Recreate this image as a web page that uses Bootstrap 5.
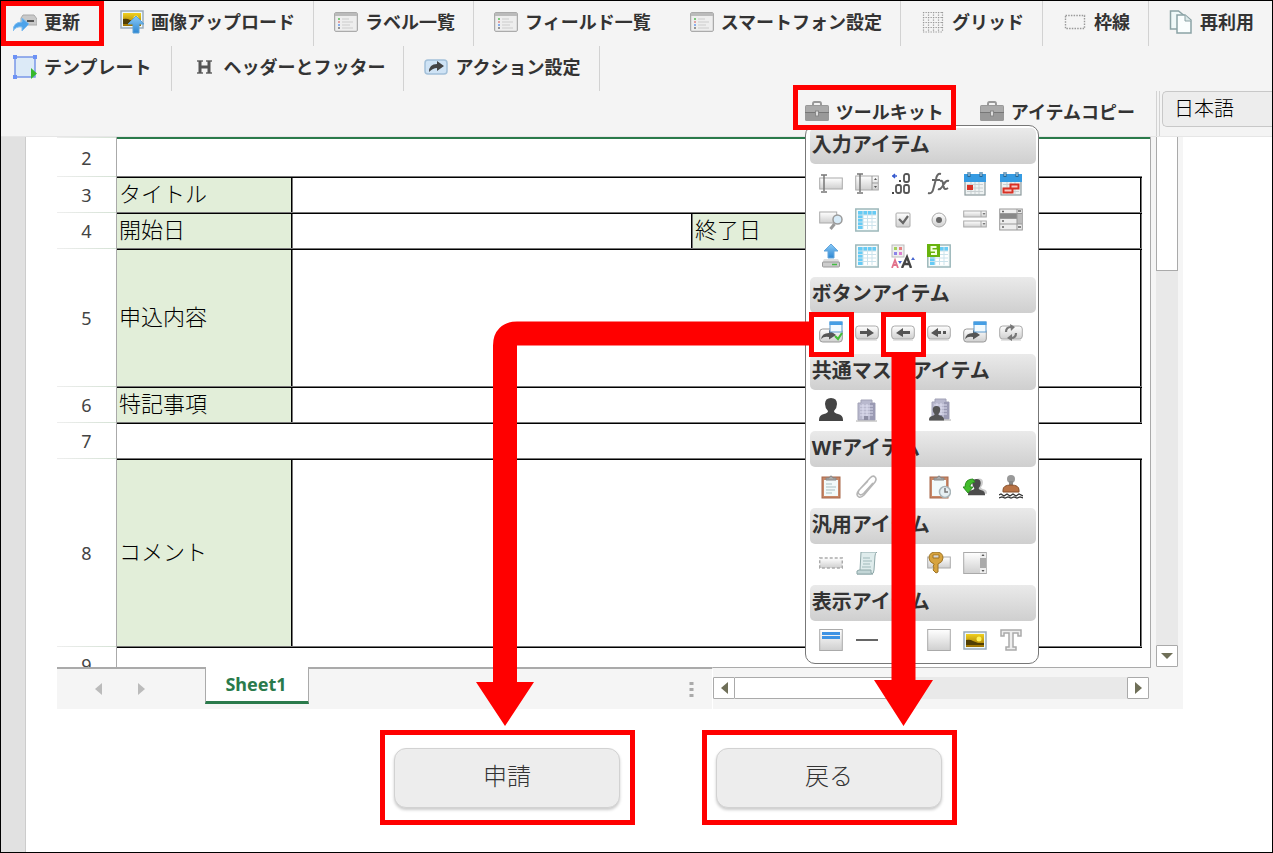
<!DOCTYPE html>
<html lang="ja">
<head>
<meta charset="utf-8">
<meta name="viewport" content="width=device-width, initial-scale=1">
<title>フォーム編集</title>
<link href="https://cdn.jsdelivr.net/npm/bootstrap@5.3.0/dist/css/bootstrap.min.css" rel="stylesheet">
<style>
  body { font-family: "Noto Sans", "Noto Sans CJK JP", sans-serif; color: #333; background: #fff; }
  svg { display: block; flex: none; }
  .app { border: 1px solid #000; overflow: hidden; }
  .bars { background: #f4f4f4; border-bottom: 1px solid #e6e6e6; }
  .bar { height: 45px; }
  .tool { display: flex; align-items: center; gap: 7px; height: 45px; padding: 0 18px 4px 20px; border: 0; border-right: 1px solid #d2d2d2; border-radius: 0; font-size: 18px; font-weight: 700; line-height: 24px; color: #333; white-space: nowrap; position: relative; }
  .tool:first-child { padding-left: 12px; padding-right: 20px; }
  .tool.open-end { border-right-color: transparent; }
  .marked::after { content: ""; position: absolute; inset: 0 -1px 0 0; border: 5px solid #f00; }
  .bar .update { padding-right: 23px; margin-right: -4px; }
  .kit { position: relative; z-index: 5; }
  .kit .tool { padding: 0 12px 4px 12px; border: 0; }
  .kit .marked::after { inset: -6px 0 6px 0; z-index: 3; }
  .copy { padding-left: 24px; padding-right: 21px; }
  .lang { width: 110px; height: 36px; padding: 0 11px; border: 1px solid #c8c8c8; border-right: 0; border-radius: 5px 0 0 5px; background: #ededed; font-size: 20px; font-weight: 300; line-height: 32px; color: #000; appearance: none; }
  .lang-wrap { border-left: 1px solid #d2d2d2; margin-left: 2px; padding-left: 2px; }

  .panel { position: absolute; top: 34px; left: 12px; width: 234px; padding: 2px 2px 1px 4px; background: #fff; border: 1px solid #777; border-radius: 10px; z-index: 2; }
  .panel h2 { height: 36px; margin: 0; padding: 0 2px; border-radius: 5px; background: linear-gradient(#eaeaea, #cfcfcf); font-size: 20px; font-weight: 700; line-height: 34px; color: #333; white-space: nowrap; }
  .icons { display: grid; grid-template-columns: repeat(6, 36px); padding: 2px 0 3px 3px; }
  .icons button { display: grid; place-items: center; width: 36px; height: 36px; padding: 0; border: 0; border-radius: 0; }
  .icons .after { grid-column: 4; }
  .arrows { position: absolute; left: -330px; top: 186px; z-index: 6; pointer-events: none; }

  .gutter { width: 25px; background: #e1e1e1; border-right: 1px solid #ccc; }
  .book { margin-left: 31px; margin-right: 89px; background: #f5f5f5; }
  .view { height: 530px; overflow: hidden; background: #fff; border-right: 1px solid #aaa; }
  .grid { width: 100%; table-layout: fixed; border-collapse: separate; border-spacing: 0; }
  .grid th, .grid td { padding: 0; vertical-align: middle; }
  .grid th { padding-top: 2px; font-size: 18px; font-weight: 400; line-height: 24px; text-align: center; color: #444; border-right: 1px solid #aaa; background: linear-gradient(90deg, #eee, #d5e2d5) top / 100% 1px no-repeat; }
  .grid td { font-size: 22px; font-weight: 300; line-height: 30px; color: #000; white-space: nowrap; }
  .grid tr.first td { border-top: 2px solid #2a7a4b; }
  .grid .top { box-shadow: inset 0 1px #777, inset 0 2px #000; }
  .grid .box { box-shadow: inset 0 1px #777, inset 0 2px #000, inset -1px 0 #777, inset -2px 0 #000; }
  .grid .name { background: #e2eed9; padding: 0 2px 2px 2px; }
  .short { height: 36px; } .first { height: 39px; } .tall { height: 138px; } .big { height: 188px; }
  .vbar { width: 22px; margin: 0 5px; background: #e9e9e9; }
  .sq { display: grid; place-items: center; width: 22px; height: 22px; padding: 0; background: #fff; border: 1px solid #aaa; border-radius: 1px; }
  .vthumb { height: 134px; background: #fff; border: 1px solid #aaa; border-top: 0; }
  .foot { height: 42px; }
  .line { border-top: 2px solid #aaa; }
  .line1 { border-top: 1px solid #aaa; }
  .prev { width: 148px; gap: 36px; padding: 0 0 0 38px; }
  .prev button { padding: 0; border: 0; background: none; }
  .sheet-tab { width: 104px; height: 37px; padding: 0 2px 0 0; background: #fff; border: 1px solid #aaa; border-top: 0; border-bottom: 3px solid #2a7a4b; font-size: 18px; font-weight: 700; line-height: 34px; color: #2a7a4b; }
  .split { padding-right: 18px; border-right: 1px solid #fff; }
  .hbar { width: 438px; padding: 9px 2px 0 0; }
  .hbar .track { height: 22px; background: #e9e9e9; }
  .hthumb { width: 170px; background: #fff; border: 1px solid #aaa; border-left: 0; }
  .results { gap: 67px; margin-top: 21px; margin-left: 354px; }
  .result { width: 255px; height: 95px; border: 5px solid #f00; padding: 13px 10px 13px 9px; }
  .result button { width: 100%; height: 60px; padding: 0 0 4px; border: 1px solid #d2d2d2; border-radius: 12px; background: #ededed; box-shadow: 0 2px 3px #ccc; font-size: 24px; font-weight: 300; line-height: 34px; color: #333; }
</style>
</head>
<body>
<svg width="0" height="0" class="position-absolute" aria-hidden="true">
  <defs>
    <linearGradient id="gy" x2="0" y2="1"><stop stop-color="#fff"/><stop offset="1" stop-color="#cfcfcf"/></linearGradient>
    <linearGradient id="bl" x2="0" y2="1"><stop stop-color="#8ccbf7"/><stop offset="1" stop-color="#2c86d2"/></linearGradient>
    <linearGradient id="gd" x2="0" y2="1"><stop stop-color="#f0d020"/><stop offset="1" stop-color="#9a7000"/></linearGradient>
    <symbol id="list" viewBox="0 0 24 24"><rect x=".7" y="2.700" width="22.600" height="18.600" rx="1" fill="#eee" stroke="#999"/><path d="M1 3h22v3H1z" fill="#bbb"/><path d="M8 9h7M8 12h11M8 15h8M8 18h11" stroke="#ccc"/><path d="M4 9h2" stroke="#5b5" stroke-width="1.500"/><path d="M4 12h2" stroke="#d88" stroke-width="1.500"/><path d="M4 15h2" stroke="#69e" stroke-width="1.500"/><path d="M4 18h2" stroke="#777" stroke-width="1.500"/></symbol>
    <symbol id="case" viewBox="0 0 24 24"><path d="M8 6V4q0-2 1.500-2h5Q16 2 16 4v2" fill="none" stroke="#999" stroke-width="2"/><rect y="5" width="24" height="16" rx="1.500" fill="#999"/><path d="M1 6h22v6H1z" fill="#aaa"/><path d="M0 12h24v1H0z" fill="#777"/><rect x="10.500" y="11" width="3" height="5" fill="#ddd" stroke="#888"/></symbol>
    <symbol id="tbl" viewBox="0 0 24 24"><rect x=".8" y="1" width="22.400" height="22" fill="#f4fafa" stroke="#9db8bb" stroke-width="1.500"/><path d="M3 3h18v4H3zM3 7h5v14H3z" fill="#66cbf5"/><path d="M8 7h13v14H8z" fill="#fff"/><path d="M3 7h18M3 10.500h18M3 14h18M3 17.500h18M8 3v18M12.500 3v18M17 3v18" stroke="#cbe3ec"/></symbol>
    <symbol id="cal" viewBox="0 0 24 24"><rect x="2" y="3" width="20" height="20" fill="#eef2f2" stroke="#8c9a9d" stroke-width="1.200"/><path d="M1 2h22v8H1z" fill="#359be2"/><path d="M6 0v5M18 0v5" stroke="#28658f" stroke-width="3"/><path d="M6 0v4M18 0v4" stroke="#cfe9f9"/><path d="M4 12.500h16M4 16h16M4 19.500h16M8 10v12M12 10v12M16 10v12" stroke="#c9d0d2"/></symbol>
    <symbol id="key" viewBox="0 0 24 24"><rect x=".7" y="5" width="22.600" height="13" rx="3" fill="url(#gy)" stroke="#aaa"/><path d="M2 19h20" stroke="#ccc"/></symbol>
    <symbol id="win" viewBox="0 0 24 24"><rect x="11" y="1" width="12" height="10" fill="#f2fbff" stroke="#5b98cc"/><path d="M10.500.500h13V4h-13z" fill="#459ee4"/></symbol>
    <symbol id="go" viewBox="0 0 24 24"><rect x=".7" y="8" width="22.600" height="13" rx="3" fill="url(#gy)" stroke="#999"/><path d="M2 18q1-6 8-6V9l7 5-7 4.500V16q-5-1-8 2z" fill="#555"/></symbol>
    <symbol id="man" viewBox="0 0 24 24"><path d="M12 0q6 0 6 6 0 4-3 7 0 2 4 3 5 1 5 6v1H0v-1q0-5 5-6 4-1 4-3-3-3-3-7 0-6 6-6z"/></symbol>
    <symbol id="bld" viewBox="0 0 24 24"><path d="M6 2h11v3h3v17H3V5h3z" fill="#b9b9ce" stroke="#a2a2b6"/><path d="M15 5h5v17h-5z" fill="#9a9ab3"/><path d="M5 8h13M5 11h13M5 14h13M5 17h13M8 6v15M12 6v15" stroke="#dcdcee"/><path d="M9 18h4v4H9z" fill="#8c8ca2"/><path d="M1 23h21" stroke="#aaa"/></symbol>
    <symbol id="clip" viewBox="0 0 24 24"><rect x="3" y="2" width="18" height="21" fill="#c98766" stroke="#a8684a"/><path d="M5 5h14v16H5z" fill="#f2fafa"/><path d="M7 5V3h3q2-4 4 0h3v2z" fill="#aaa" stroke="#888"/></symbol>
    <symbol id="pic" viewBox="0 0 24 24"><rect x="1" y="3" width="22" height="17" fill="#eef9fc" stroke="#9ab" stroke-width="1.500"/><path d="M3 5h18v13H3z" fill="url(#gd)"/><path d="M3 11q4-1 7 1l5 2h6v2H3z" fill="#503f05"/><circle cx="16" cy="10" r="2.500" fill="#fff45c"/></symbol>
  </defs>
</svg>

<div class="app min-vh-100 d-flex flex-column position-relative">
  <header class="bars">
    <nav class="bar d-flex" aria-label="編集">
      <button class="btn tool open-end marked update"><svg width="24" height="24" viewBox="0 0 24 24"><path d="M10 5h11l3 4v6H8V8z" fill="#c9c9c9" stroke="#aaa"/><path d="M14 11h7" stroke="#555" stroke-width="2"/><path d="M0 21Q0 12 9 12V8l7 6-7 7v-4q-6-1-9 4z" fill="#4da3ea" stroke="#7fbdf0"/></svg>更新</button>
      <button class="btn tool"><svg width="24" height="24" viewBox="0 0 24 24"><use href="#pic" y="-2"/><path d="M16 6l8 8h-5v9h-6v-9H8z" fill="url(#bl)" stroke="#5ca2d8"/></svg>画像アップロード</button>
      <button class="btn tool"><svg width="24" height="24"><use href="#list"/></svg>ラベル一覧</button>
      <button class="btn tool open-end"><svg width="24" height="24"><use href="#list"/></svg>フィールド一覧</button>
      <button class="btn tool"><svg width="24" height="24"><use href="#list"/></svg>スマートフォン設定</button>
      <button class="btn tool"><svg width="24" height="24" viewBox="0 0 24 24"><path d="M2 2.500h20M2 7.500h20M2 12.500h20M2 17.500h20M2 22h20M2.500 2v20M7.500 2v20M12.500 2v20M17.500 2v20M21.500 2v20" stroke="#999" stroke-width="1.200" stroke-dasharray="1.300 1.200"/></svg>グリッド</button>
      <button class="btn tool"><svg width="24" height="24" viewBox="0 0 24 24"><rect x="2.500" y="5.500" width="19" height="13" fill="none" stroke="#999" stroke-width="1.400" stroke-dasharray="1.500 1.200"/></svg>枠線</button>
      <button class="btn tool open-end"><svg width="24" height="24" viewBox="0 0 24 24"><path d="M1.500 1h8l5 4v14h-13z" fill="#eff8f8" stroke="#8ba2a5" stroke-width="1.500"/><path d="M8 5h8l6 5v13H8z" fill="#fafefe" stroke="#8ba2a5" stroke-width="1.500"/><path d="M16 5v6h6" fill="#dce9e9" stroke="#8ba2a5"/></svg>再利用</button>
    </nav>
    <nav class="bar d-flex" aria-label="設定">
      <button class="btn tool"><svg width="24" height="24" viewBox="0 0 24 24"><rect x="2" y="2" width="20" height="20" fill="#dceaf7" stroke="#7896e8" stroke-width="1.500"/><path d="M0 0h4v4H0zM20 0h4v4h-4zM0 20h4v4H0z" fill="#6d92f5"/><path d="M18 13l6 5.500-6 5.500z" fill="#37b92c"/></svg>テンプレート</button>
      <button class="btn tool"><svg width="24" height="24" viewBox="0 0 24 24"><path d="M5 6h6M14 6h6M5 18h6M14 18h6" stroke="#666" stroke-width="1.500"/><path d="M8 6v12M17 6v12M8 12h9" stroke="#555" stroke-width="3" fill="none"/></svg>ヘッダーとフッター</button>
      <button class="btn tool"><svg width="24" height="24" viewBox="0 0 24 24"><rect x="1" y="5" width="22" height="14" rx="3" fill="#cfe3f5" stroke="#a3c0d9" stroke-width="1.500"/><path d="M5 17q0-8 8-8V6l7 5-7 5v-3q-4 0-8 4z" fill="#444"/></svg>アクション設定</button>
    </nav>
    <div class="bar d-flex justify-content-end">
      <div class="kit">
        <button class="btn tool marked"><svg width="24" height="24"><use href="#case"/></svg>ツールキット</button>
        <div class="panel">
          <h2>入力アイテム</h2>
          <div class="icons">
            <button class="btn" aria-label="文字列"><svg width="24" height="24" viewBox="0 0 24 24"><rect x=".7" y="6" width="22.600" height="11" fill="url(#gy)" stroke="#aaa"/><path d="M2 3h6M5 3v16M2 20h6" stroke="#777" stroke-width="1.500"/></svg></button>
            <button class="btn" aria-label="数値"><svg width="24" height="24" viewBox="0 0 24 24"><rect x=".7" y="4" width="22.600" height="14" fill="url(#gy)" stroke="#aaa"/><path d="M17 4v14M17 11h6" stroke="#999"/><path d="M19 8h3l-1.500-2zM19 14h3l-1.500 2z" fill="#555"/><path d="M2 2h6M5 2v18M2 21h6" stroke="#777" stroke-width="1.500"/></svg></button>
            <button class="btn" aria-label="小数"><svg width="24" height="24" viewBox="0 0 24 24"><path d="M1 4h5M4 2L2 4l2 2" fill="none" stroke="#3659ce" stroke-width="1.500"/><path d="M8 9h2M1 21h2" stroke="#444" stroke-width="2"/><g fill="none" stroke="#555" stroke-width="1.800"><rect x="13" y="2" width="5" height="8" rx="2"/><rect x="5" y="13" width="5" height="8" rx="2"/><rect x="13" y="13" width="5" height="8" rx="2"/></g></svg></button>
            <button class="btn" aria-label="関数"><svg width="24" height="24" viewBox="0 0 24 24"><path d="M14 2q-4-1-5 5L6 18q-1 4-5 3M5 8h8M13 9q3-1 3 3l1 4q1 2 4 0M22 9q-3-1-5 3l-2 3q-2 3-4 2" fill="none" stroke="#666" stroke-width="2"/></svg></button>
            <button class="btn" aria-label="日付"><svg width="24" height="24" viewBox="0 0 24 24"><use href="#cal"/><path d="M4 13h6v5H4z" fill="#d93024"/></svg></button>
            <button class="btn" aria-label="期間"><svg width="24" height="24" viewBox="0 0 24 24"><use href="#cal"/><path d="M4.500 20.500v-4h7v-4h8v4h-6v4z" fill="#f6c9c5" stroke="#d93024" stroke-width="2"/></svg></button>
            <button class="btn" aria-label="検索"><svg width="24" height="24" viewBox="0 0 24 24"><rect x=".7" y="4" width="17" height="11" fill="url(#gy)" stroke="#aaa"/><circle cx="18.500" cy="11.500" r="4.500" fill="#d7ebf8" stroke="#999" stroke-width="1.500"/><path d="M15.500 16l-4 5" stroke="#999" stroke-width="3"/></svg></button>
            <button class="btn" aria-label="テーブル"><svg width="24" height="24"><use href="#tbl"/></svg></button>
            <button class="btn" aria-label="チェックボックス"><svg width="24" height="24" viewBox="0 0 24 24"><rect x="5" y="5" width="14" height="14" rx="1" fill="url(#gy)" stroke="#aaa"/><path d="M8 11l4 4 5-7" fill="none" stroke="#666" stroke-width="2.200"/></svg></button>
            <button class="btn" aria-label="ラジオボタン"><svg width="24" height="24" viewBox="0 0 24 24"><circle cx="12" cy="12" r="7" fill="url(#gy)" stroke="#aaa"/><circle cx="12" cy="12" r="3" fill="#666"/></svg></button>
            <button class="btn" aria-label="セレクト"><svg width="24" height="24" viewBox="0 0 24 24"><g fill="url(#gy)" stroke="#aaa"><rect x=".7" y="3" width="22.600" height="6"/><rect x=".7" y="13" width="22.600" height="6"/></g><path d="M18 3v6M18 13v6" stroke="#aaa"/><path d="M19.500 5h3L21 7zM19.500 15h3L21 17z" fill="#777"/></svg></button>
            <button class="btn" aria-label="リスト"><svg width="24" height="24" viewBox="0 0 24 24"><rect x=".7" y="1" width="22.600" height="21" fill="#eee" stroke="#999"/><path d="M1 6h17v4H1z" fill="#888"/><path d="M18 6h5v10h-5z" fill="#bbb"/><path d="M1 5.500h22M1 10.500h17M1 16h22M18 1v21" stroke="#999"/><path d="M19 3h3M19 19h3M3 3.500h2M3 13h2M3 19h2" stroke="#666" stroke-width="1.500"/></svg></button>
            <button class="btn" aria-label="アップロード"><svg width="24" height="24" viewBox="0 0 24 24"><path d="M12 0l7 7h-4v7H9V7H5z" fill="url(#bl)" stroke="#65a6dc"/><path d="M5 15h14l2 4H3z" fill="#ddd"/><rect x="3.500" y="18" width="17" height="5" rx="1" fill="#ccc" stroke="#999"/><path d="M13 20.500h5" stroke="#4b4" stroke-width="1.500"/></svg></button>
            <button class="btn" aria-label="一覧表"><svg width="24" height="24"><use href="#tbl"/></svg></button>
            <button class="btn" aria-label="書式"><svg width="24" height="24" viewBox="0 0 24 24"><rect x="1" y="1" width="12" height="12" fill="#eee" stroke="#bbb"/><path d="M3 3h3v3H3z" fill="#a4d05c"/><path d="M8 3h3v3H8z" fill="#e58080"/><path d="M3 8h3v3H3z" fill="#8b83e8"/><path d="M8 8h3v3H8z" fill="#df7fd0"/><path d="M1 24l3-8 3 8M2 21h4" fill="none" stroke="#e2728c" stroke-width="1.800"/><path d="M11 24l5-11 4 11M12 20h7" fill="none" stroke="#444" stroke-width="2.400"/><path d="M7 17h4l-2 3zM20 16h4l-2-3z" fill="#4766d0"/></svg></button>
            <button class="btn" aria-label="スプレッドシート"><svg width="24" height="24"><use href="#tbl"/><path d="M0 0h13v13H0z" fill="#68b30d"/><path d="M9.500 3H4.500v3.500h4.500V10H4" fill="none" stroke="#f4ffe0" stroke-width="2"/></svg></button>
          </div>
          <h2>ボタンアイテム</h2>
          <div class="icons">
            <button class="btn" aria-label="申請"><svg width="24" height="24"><use href="#go"/><use href="#win"/><path d="M16 15l3 3 4-6" fill="none" stroke="#45bd3a" stroke-width="2.200"/></svg></button>
            <button class="btn" aria-label="進む"><svg width="24" height="24"><use href="#key"/><path d="M5 10h7V7l7 5-7 4v-3H5z" fill="#555"/></svg></button>
            <button class="btn" aria-label="戻る"><svg width="24" height="24"><use href="#key"/><path d="M19 10h-7V7l-7 5 7 4v-3h7z" fill="#555"/></svg></button>
            <button class="btn" aria-label="前に戻る"><svg width="24" height="24"><use href="#key"/><path d="M14 10h-3V7l-7 5 7 4v-3h3zM16 10h3v3h-3z" fill="#555"/></svg></button>
            <button class="btn" aria-label="別画面"><svg width="24" height="24"><use href="#go"/><use href="#win"/></svg></button>
            <button class="btn" aria-label="再読込"><svg width="24" height="24"><use href="#key"/><path d="M7 11q0-5 5-5M17 12q0 5-5 5" fill="none" stroke="#777" stroke-width="2.200"/><path d="M11 3l5 3-4 4zM13 13v7l-5-3z" fill="#777"/></svg></button>
          </div>
          <h2>共通マスタアイテム</h2>
          <div class="icons">
            <button class="btn" aria-label="ユーザー"><svg width="24" height="24" fill="#444"><use href="#man"/></svg></button>
            <button class="btn" aria-label="組織"><svg width="24" height="24"><use href="#bld"/></svg></button>
            <button class="btn after" aria-label="所属"><svg width="24" height="24" fill="#555"><use href="#bld" x="2" y="-1"/><use href="#man" x="2" y="8" width="15" height="15"/></svg></button>
          </div>
          <h2>WFアイテム</h2>
          <div class="icons">
            <button class="btn" aria-label="案件"><svg width="24" height="24"><use href="#clip"/><path d="M7 9h6M7 12h10M7 15h9M7 18h6" stroke="#a9bfc1"/></svg></button>
            <button class="btn" aria-label="添付"><svg width="24" height="24"><path d="M18 8L9 18q-3 3-5 1t1-5L15 3q3-3 5-1t0 5L9 20q-3 3-5 2-4-2 0-7l9-9" fill="none" stroke="#b5b5b5" stroke-width="1.600"/></svg></button>
            <button class="btn after" aria-label="履歴"><svg width="24" height="24"><use href="#clip"/><circle cx="18" cy="17" r="5.500" fill="#e6eff3" stroke="#a9b5b9" stroke-width="1.500"/><path d="M18 13v4h3" fill="none" stroke="#777" stroke-width="1.500"/></svg></button>
            <button class="btn" aria-label="引戻し"><svg width="24" height="24"><use href="#man" x="8" y="3" width="16" height="17" fill="#ccc"/><use href="#man" x="5" y="4" width="17" height="17" fill="#4c4c4c"/><path d="M10 4q-8 0-8 8H0l5 6 5-6H7q0-4 5-5z" fill="#43bd2c" stroke="#2c8d21"/></svg></button>
            <button class="btn" aria-label="押印"><svg width="24" height="24"><circle cx="12" cy="4" r="4" fill="#999"/><path d="M10 6h4v5h-4z" fill="#888"/><path d="M4 15q0-5 8-5t8 5v2H4z" fill="#b97345" stroke="#87512d"/><path d="M0 20l2-1 3 2 3-2 3 2 3-2 3 2 3-2 4 2M0 23l3-1 3 1 3-1 3 1 3-1 3 1 3-1 3 1" fill="none" stroke="#333" stroke-width="1.300"/></svg></button>
          </div>
          <h2>汎用アイテム</h2>
          <div class="icons">
            <button class="btn" aria-label="隠し項目"><svg width="24" height="24"><rect x=".7" y="6" width="22.600" height="10" fill="url(#gy)" stroke="#aaa" stroke-dasharray="3 2" stroke-width="1.500"/></svg></button>
            <button class="btn" aria-label="スクリプト"><svg width="24" height="24"><path d="M6 0h16q-2 1-2 4l-1 14q0 4-3 4H2q3-1 3-4z" fill="#dfecec" stroke="#8fa8a9"/><path d="M2 22q-1-4 2-4h12q-1 4 2 4z" fill="#c3d6d7" stroke="#8fa8a9"/><path d="M8 6h7M8 9h9M8 12h7M7 15h9" stroke="#9fb9ba"/></svg></button>
            <button class="btn after" aria-label="キー"><svg width="24" height="24"><rect x=".7" y="5" width="22.600" height="11" fill="url(#gy)" stroke="#aaa"/><path fill-rule="evenodd" d="M9 0q7 0 7 6 0 4-5 6v8l-2 1-3-3 1-2-1-2 1-1v-1q-5-2-5-6 0-6 7-6zM6 3v3h6V3z" fill="#d7a33e" stroke="#9e7324"/></svg></button>
            <button class="btn" aria-label="テキスト領域"><svg width="24" height="24"><rect x=".7" y="0.500" width="22.600" height="21" fill="url(#gy)" stroke="#aaa"/><path d="M17 1h6v21h-6z" fill="#aaa"/><path d="M17 1h6v5h-6zM17 16h6v5h-6z" fill="#eee"/><path d="M18.500 4h3L20 2zM18.500 18h3L20 20z" fill="#555"/></svg></button>
          </div>
          <h2>表示アイテム</h2>
          <div class="icons">
            <button class="btn" aria-label="見出し"><svg width="24" height="24"><rect x=".7" y=".500" width="22.600" height="21" fill="url(#gy)" stroke="#aaa"/><path d="M3 3h18v3H3zM3 7h18v3H3z" fill="#3e93e4"/></svg></button>
            <button class="btn" aria-label="横線"><svg width="24" height="24"><path d="M1 11h22" stroke="#666" stroke-width="2"/></svg></button>
            <button class="btn after" aria-label="枠"><svg width="24" height="24"><rect x=".7" y=".500" width="22.600" height="21" fill="url(#gy)" stroke="#aaa"/></svg></button>
            <button class="btn" aria-label="画像"><svg width="24" height="24"><use href="#pic"/></svg></button>
            <button class="btn" aria-label="文字"><svg width="24" height="24"><path d="M2 1h20v6h-3V4h-5v14h3v3H7v-3h3V4H5v3H2z" fill="#eee" stroke="#aaa" stroke-width="1.500"/></svg></button>
          </div>
          <svg class="arrows" width="458" height="415" viewBox="476 312 458 415" aria-hidden="true">
            <g fill="none" stroke="#f00"><rect x="811.500" y="314.500" width="40" height="40" stroke-width="5"/><rect x="883.500" y="314.500" width="40" height="40" stroke-width="5"/><path d="M810 333.500H517q-12 0-12 12V684M903.500 356V681" stroke-width="24"/></g>
            <path d="M476 682h58l-29 44zM874 680h59l-29.500 46z" fill="#f00"/>
          </svg>
        </div>
      </div>
      <button class="btn tool copy"><svg width="24" height="24"><use href="#case"/></svg>アイテムコピー</button>
      <div class="lang-wrap"><select class="lang" aria-label="言語"><option>日本語</option></select></div>
    </div>
  </header>

  <div class="d-flex flex-grow-1">
    <div class="gutter flex-shrink-0"></div>
    <main class="flex-grow-1">
      <div class="book">
        <div class="d-flex">
          <div class="view flex-grow-1">
            <table class="grid">
              <colgroup><col style="width:60px"><col style="width:176px"><col style="width:400px"><col style="width:176px"><col><col style="width:8px"></colgroup>
              <tbody>
                <tr class="first"><th scope="row">2</th><td colspan="4"></td><td></td></tr>
                <tr class="short"><th scope="row">3</th><td class="box name">タイトル</td><td colspan="3" class="box"></td><td></td></tr>
                <tr class="short"><th scope="row">4</th><td class="box name">開始日</td><td class="box"></td><td class="box name">終了日</td><td class="box"></td><td></td></tr>
                <tr class="tall"><th scope="row">5</th><td class="box name">申込内容</td><td colspan="3" class="box"></td><td></td></tr>
                <tr class="short"><th scope="row">6</th><td class="box name">特記事項</td><td colspan="3" class="box"></td><td></td></tr>
                <tr class="short"><th scope="row">7</th><td colspan="4" class="top"></td><td></td></tr>
                <tr class="big"><th scope="row">8</th><td class="box name">コメント</td><td colspan="3" class="box"></td><td></td></tr>
                <tr class="short"><th scope="row">9</th><td colspan="4" class="top"></td><td></td></tr>
              </tbody>
            </table>
          </div>
          <div class="vbar d-flex flex-column justify-content-between flex-shrink-0">
            <div class="vthumb"></div>
            <button class="sq" aria-label="下へ"><svg width="12" height="6" viewBox="0 0 12 6"><path d="M0 0h12L6 6z" fill="#6f6f58"/></svg></button>
          </div>
        </div>
        <div class="foot d-flex">
          <div class="prev line d-flex align-items-center">
            <button aria-label="前のシート"><svg width="7" height="12" viewBox="0 0 7 12"><path d="M7 0v12L0 6z" fill="#bbb"/></svg></button>
            <button aria-label="次のシート"><svg width="7" height="12" viewBox="0 0 7 12"><path d="M0 0v12l7-6z" fill="#bbb"/></svg></button>
          </div>
          <button class="sheet-tab">Sheet1</button>
          <div class="split line flex-grow-1 d-flex justify-content-end align-items-center">
            <svg width="5" height="16" viewBox="0 0 5 16"><path d="M.500 1h4v3h-4zM.500 7h4v3h-4zM.500 13h4v3h-4z" fill="#aaa"/></svg>
          </div>
          <div class="hbar line1 flex-shrink-0">
            <div class="track d-flex">
              <button class="sq" aria-label="左へ"><svg width="7" height="12" viewBox="0 0 7 12"><path d="M7 0v12L0 6z" fill="#6f6f58"/></svg></button>
              <div class="hthumb"></div>
              <button class="sq ms-auto" aria-label="右へ"><svg width="7" height="12" viewBox="0 0 7 12"><path d="M0 0v12l7-6z" fill="#6f6f58"/></svg></button>
            </div>
          </div>
          <div class="vbar bg-transparent flex-shrink-0"></div>
        </div>
      </div>
      <div class="results d-flex">
        <div class="result"><button>申請</button></div>
        <div class="result"><button>戻る</button></div>
      </div>
    </main>
  </div>
</div>
<script src="https://cdn.jsdelivr.net/npm/bootstrap@5.3.0/dist/js/bootstrap.bundle.min.js"></script>
</body>
</html>
